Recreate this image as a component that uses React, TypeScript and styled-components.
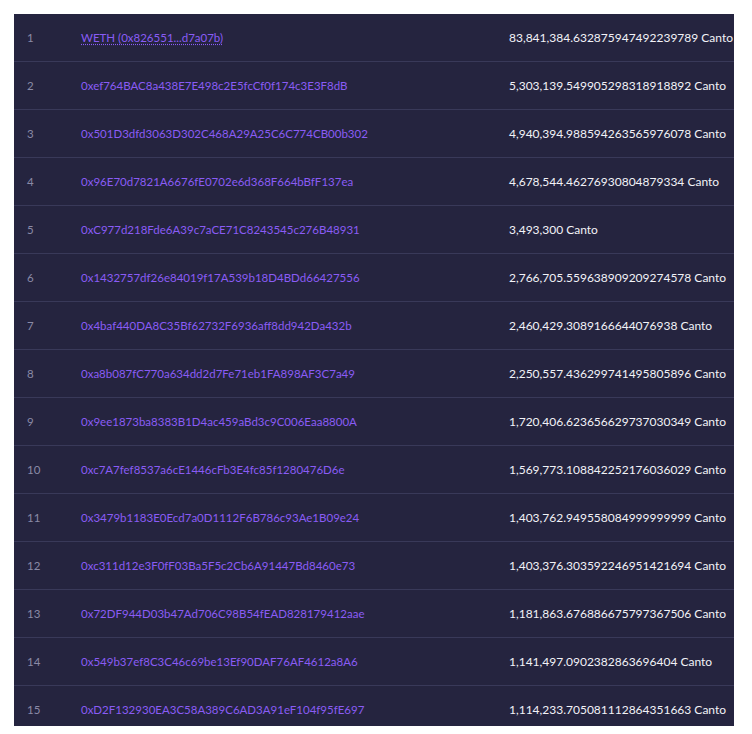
import styled, { createGlobalStyle } from 'styled-components';

const GlobalStyle = createGlobalStyle`
  html, body {
    margin: 0;
    padding: 0;
    background: #ffffff;
  }
  body {
    font-family: Lato, "Noto Sans", sans-serif;
  }
`;

const Page = styled.div`
  padding: 14px 18px 8px 14px;
`;

const Table = styled.div`
  width: 720px;
  height: 712px;
  overflow: hidden;
  background: #25243f;
`;

const Row = styled.div`
  height: 48px;
  box-sizing: border-box;
  border-bottom: 1px solid #393959;
  display: grid;
  grid-template-columns: 54px 428px 1fr;
  align-items: center;
  padding-left: 13px;
  font-size: 11.5px;
`;

const Rank = styled.span`
  color: #8a8aa6;
`;

const Address = styled.a<{ $named?: boolean }>`
  color: #8a5cf5;
  text-decoration: ${(p) => (p.$named ? 'underline dotted' : 'none')};
  text-underline-offset: 2px;
  white-space: nowrap;
  cursor: pointer;
`;

const Amount = styled.span`
  color: #f2f2f7;
  font-size: 12px;
  white-space: nowrap;
`;

const holders = [
  { addr: 'WETH (0x826551...d7a07b)', amount: '83,841,384.632875947492239789', named: true },
  { addr: '0xef764BAC8a438E7E498c2E5fcCf0f174c3E3F8dB', amount: '5,303,139.549905298318918892' },
  { addr: '0x501D3dfd3063D302C468A29A25C6C774CB00b302', amount: '4,940,394.988594263565976078' },
  { addr: '0x96E70d7821A6676fE0702e6d368F664bBfF137ea', amount: '4,678,544.46276930804879334' },
  { addr: '0xC977d218Fde6A39c7aCE71C8243545c276B48931', amount: '3,493,300' },
  { addr: '0x1432757df26e84019f17A539b18D4BDd66427556', amount: '2,766,705.559638909209274578' },
  { addr: '0x4baf440DA8C35Bf62732F6936aff8dd942Da432b', amount: '2,460,429.3089166644076938' },
  { addr: '0xa8b087fC770a634dd2d7Fe71eb1FA898AF3C7a49', amount: '2,250,557.436299741495805896' },
  { addr: '0x9ee1873ba8383B1D4ac459aBd3c9C006Eaa8800A', amount: '1,720,406.623656629737030349' },
  { addr: '0xc7A7fef8537a6cE1446cFb3E4fc85f1280476D6e', amount: '1,569,773.108842252176036029' },
  { addr: '0x3479b1183E0Ecd7a0D1112F6B786c93Ae1B09e24', amount: '1,403,762.949558084999999999' },
  { addr: '0xc311d12e3F0fF03Ba5F5c2Cb6A91447Bd8460e73', amount: '1,403,376.303592246951421694' },
  { addr: '0x72DF944D03b47Ad706C98B54fEAD828179412aae', amount: '1,181,863.676886675797367506' },
  { addr: '0x549b37ef8C3C46c69be13Ef90DAF76AF4612a8A6', amount: '1,141,497.0902382863696404' },
  { addr: '0xD2F132930EA3C58A389C6AD3A91eF104f95fE697', amount: '1,114,233.705081112864351663' },
];

export default function App() {
  return (
    <>
      <GlobalStyle />
      <Page>
        <Table>
          {holders.map((h, i) => (
            <Row key={h.addr}>
              <Rank>{i + 1}</Rank>
              <Address $named={h.named}>{h.addr}</Address>
              <Amount>{h.amount} Canto</Amount>
            </Row>
          ))}
        </Table>
      </Page>
    </>
  );
}
